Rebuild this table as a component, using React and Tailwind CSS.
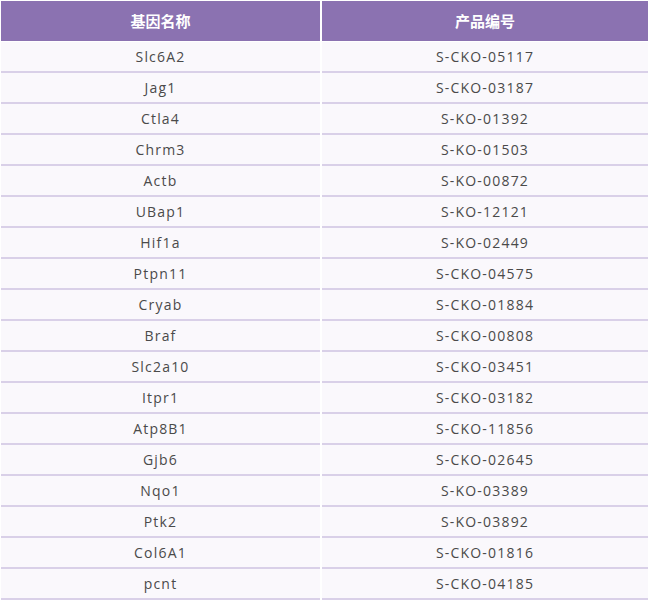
import React from 'react';

const rows = [
  ['Slc6A2', 'S-CKO-05117'],
  ['Jag1', 'S-CKO-03187'],
  ['Ctla4', 'S-KO-01392'],
  ['Chrm3', 'S-KO-01503'],
  ['Actb', 'S-KO-00872'],
  ['UBap1', 'S-KO-12121'],
  ['Hif1a', 'S-KO-02449'],
  ['Ptpn11', 'S-CKO-04575'],
  ['Cryab', 'S-CKO-01884'],
  ['Braf', 'S-CKO-00808'],
  ['Slc2a10', 'S-CKO-03451'],
  ['Itpr1', 'S-CKO-03182'],
  ['Atp8B1', 'S-CKO-11856'],
  ['Gjb6', 'S-CKO-02645'],
  ['Nqo1', 'S-KO-03389'],
  ['Ptk2', 'S-KO-03892'],
  ['Col6A1', 'S-CKO-01816'],
  ['pcnt', 'S-CKO-04185'],
];

const cell = "h-[31px] flex items-center justify-center bg-[#faf8fc] border-b-2 border-[#d9d0e8] text-[14px] tracking-[1.2px] text-[#4a4a4a]";

export default function App() {
  return (
    <div className="w-[649px] h-[600px] overflow-hidden bg-white pl-[1px] pt-[1px]" style={{ fontFamily: '"Open Sans", "Noto Sans CJK SC", sans-serif' }}>
      <div className="grid grid-cols-[319px_326px] gap-x-[2px]">
        <div className="h-[40px] mb-[1px] flex items-center justify-center bg-[#8b72b1] text-white font-bold text-[15px]">基因名称</div>
        <div className="h-[40px] mb-[1px] flex items-center justify-center bg-[#8b72b1] text-white font-bold text-[15px]">产品编号</div>
        {rows.map(([gene, code]) => (
          <React.Fragment key={gene}>
            <div className={cell}>{gene}</div>
            <div className={cell}>{code}</div>
          </React.Fragment>
        ))}
      </div>
    </div>
  );
}
